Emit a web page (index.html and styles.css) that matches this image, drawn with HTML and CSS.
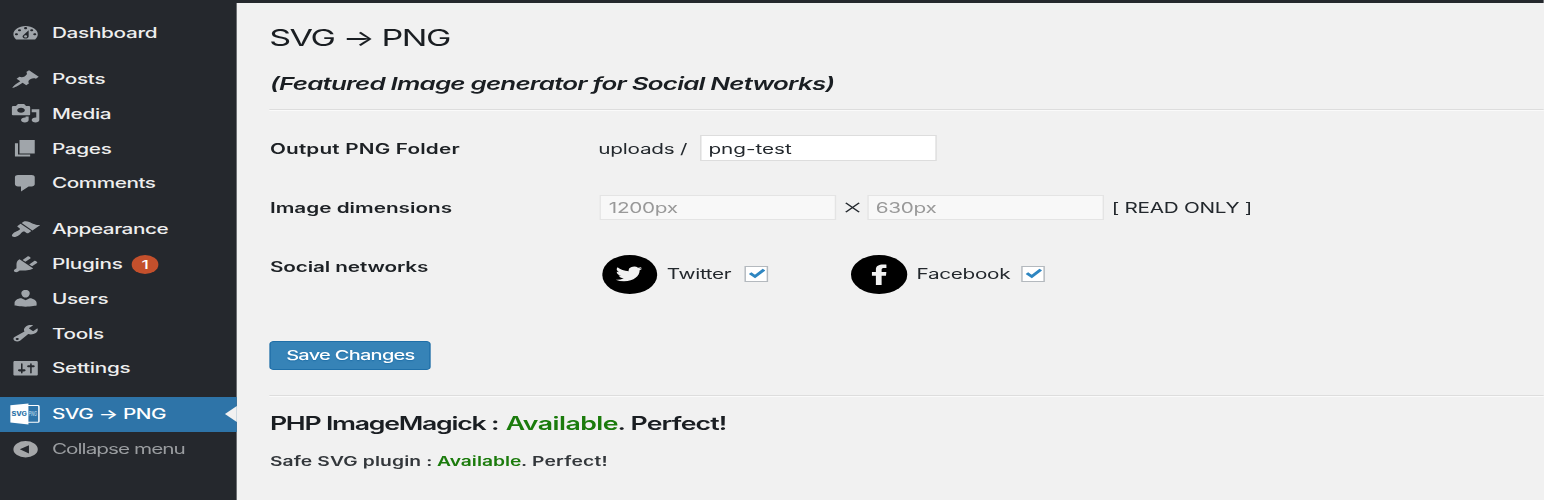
FILE: index.html
```
<!DOCTYPE html>
<html lang="en">
<head>
<meta charset="utf-8">
<title>SVG → PNG</title>
<link rel="stylesheet" href="styles.css">
</head>
<body>
<div class="screen">
  <nav class="sidebar">
    <a class="item"><svg class="ico" viewBox="0 0 20 20"><path d="M3.76 16h12.48c1.1-1.37 1.76-3.11 1.76-5 0-4.42-3.58-8-8-8s-8 3.58-8 8c0 1.89.66 3.63 1.76 5zM10 4c.55 0 1 .45 1 1s-.45 1-1 1-1-.45-1-1 .45-1 1-1zM6 6c.55 0 1 .45 1 1s-.45 1-1 1-1-.45-1-1 .45-1 1-1zm8 0c.55 0 1 .45 1 1s-.45 1-1 1-1-.45-1-1 .45-1 1-1zm-5.37 5.55L12 7v6c0 1.1-.9 2-2 2s-2-.9-2-2c0-.57.24-1.08.63-1.45zM4 10c.55 0 1 .45 1 1s-.45 1-1 1-1-.45-1-1 .45-1 1-1zm12 0c.55 0 1 .45 1 1s-.45 1-1 1-1-.45-1-1 .45-1 1-1zm-5 3c0-.55-.45-1-1-1s-1 .45-1 1 .45 1 1 1 1-.45 1-1z"/></svg><span>Dashboard</span></a>
    <a class="item first"><svg class="ico" viewBox="0 0 20 20"><path d="M10.44 3.02l1.82-1.82 6.36 6.35-1.83 1.82c-1.05-.68-2.48-.57-3.41.36l-.75.75c-.92.93-1.04 2.35-.35 3.41l-1.83 1.82-2.41-2.41-2.8 2.79c-.42.42-3.38 2.71-3.8 2.29s1.86-3.39 2.28-3.81l2.79-2.79L4.1 9.36l1.83-1.82c1.05.69 2.48.57 3.4-.36l.75-.75c.93-.92 1.05-2.35.36-3.41z"/></svg><span>Posts</span></a>
    <a class="item"><svg class="ico" viewBox="0 0 20 20"><path d="M13 11V4c0-.55-.45-1-1-1h-1.67L9 1H5L3.67 3H2c-.55 0-1 .45-1 1v7c0 .55.45 1 1 1h10c.55 0 1-.45 1-1zM7 4.5c1.38 0 2.5 1.12 2.5 2.5S8.38 9.5 7 9.5 4.5 8.38 4.5 7 5.62 4.5 7 4.5zM14 6h5v10.5c0 1.38-1.12 2.5-2.5 2.5S14 17.88 14 16.5s1.12-2.5 2.5-2.5c.17 0 .34.02.5.05V9h-3V6zm-4 8.05V13h2v3.5c0 1.38-1.12 2.5-2.5 2.5S7 17.88 7 16.5 8.12 14 9.5 14c.17 0 .34.02.5.05z"/></svg><span>Media</span></a>
    <a class="item"><svg class="ico" viewBox="0 0 20 20"><path d="M6 15V2h10v13H6zm-1 1h8v2H3V5h2v11z"/></svg><span>Pages</span></a>
    <a class="item"><svg class="ico" viewBox="0 0 20 20"><path d="M5 2h9c1.1 0 2 .9 2 2v7c0 1.1-.9 2-2 2h-2l-5 5v-5H5c-1.1 0-2-.9-2-2V4c0-1.1.9-2 2-2z"/></svg><span class="snug">Comments</span></a>
    <a class="item first"><svg class="ico" viewBox="0 0 20 20"><path d="M14.48 11.06L7.41 3.99l1.5-1.5c.5-.56 2.3-.47 3.51.32 1.21.8 1.43 1.28 2.91 2.1 1.18.64 2.45 1.26 4.45.85zm-.71.71L6.7 4.7 4.93 6.47c-.39.39-.39 1.02 0 1.41l1.06 1.06c.39.39.39 1.03 0 1.42-.6.6-1.43 1.11-2.21 1.69-.35.26-.7.53-1.01.84C1.43 14.23.4 16.08 1.4 17.07c.99 1 2.84-.03 4.18-1.36.31-.31.58-.66.85-1.02.57-.78 1.08-1.61 1.69-2.21.39-.39 1.02-.39 1.41 0l1.06 1.06c.39.39 1.02.39 1.41 0z"/></svg><span class="snug">Appearance</span></a>
    <a class="item"><svg class="ico" viewBox="0 0 20 20"><path d="M13.11 4.36L9.87 7.6 8 5.73l3.24-3.24c.35-.34 1.05-.2 1.56.32.52.51.66 1.21.31 1.55zm-8 1.77l.91-1.12 9.01 9.01-1.19.84c-.71.71-2.63 1.16-3.82 1.16H6.14L4.9 17.26c-.59.59-1.54.59-2.12 0-.59-.58-.59-1.53 0-2.12l1.24-1.24v-3.88c0-1.13.4-3.19 1.09-3.89zm7.26 3.97l3.24-3.24c.34-.35 1.04-.21 1.55.31.52.51.66 1.21.31 1.55l-3.24 3.25z"/></svg><span>Plugins</span><b class="badge">1</b></a>
    <a class="item"><svg class="ico" viewBox="0 0 20 20"><path d="M10 9.25c-2.27 0-2.73-3.44-2.73-3.44C7 4.02 7.82 2 9.97 2c2.16 0 2.98 2.02 2.71 3.81 0 0-.41 3.44-2.68 3.44zm0 2.57L12.72 10c2.39 0 4.52 2.33 4.52 4.53v2.49s-3.65 1.13-7.24 1.13c-3.65 0-7.24-1.13-7.24-1.13v-2.49c0-2.25 1.94-4.48 4.47-4.48z"/></svg><span>Users</span></a>
    <a class="item"><svg class="ico" viewBox="0 0 20 20"><path d="M16.68 9.77c-1.34 1.34-3.3 1.67-4.95.99l-5.41 6.52c-.99.99-2.59.99-3.58 0s-.99-2.59 0-3.57l6.52-5.42c-.68-1.65-.35-3.61.99-4.95 1.28-1.28 3.12-1.62 4.72-1.06l-2.89 2.89 2.82 2.82 2.86-2.87c.53 1.58.18 3.39-1.08 4.65zM3.81 16.21c.4.39 1.04.39 1.43 0 .4-.4.4-1.04 0-1.43-.39-.4-1.03-.4-1.43 0-.39.39-.39 1.03 0 1.43z"/></svg><span>Tools</span></a>
    <a class="item"><svg class="ico" viewBox="0 0 20 20"><path d="M18 16V4c0-.55-.45-1-1-1H3c-.55 0-1 .45-1 1v12c0 .55.45 1 1 1h14c.55 0 1-.45 1-1zM8 11h1c.55 0 1 .45 1 1s-.45 1-1 1H8v1.5c0 .28-.22.5-.5.5s-.5-.22-.5-.5V13H6c-.55 0-1-.45-1-1s.45-1 1-1h1V5.5c0-.28.22-.5.5-.5s.5.22.5.5V11zm5-2h-1c-.55 0-1-.45-1-1s.45-1 1-1h1V5.5c0-.28.22-.5.5-.5s.5.22.5.5V7h1c.55 0 1 .45 1 1s-.45 1-1 1h-1v5.5c0 .28-.22.5-.5.5s-.5-.22-.5-.5V9z"/></svg><span>Settings</span></a>
    <a class="item first current">
      <svg class="logo" viewBox="0 0 20 22">
        <rect x="10" y="2.6" width="9.3" height="16.6" rx=".8" fill="none" stroke="#fff" stroke-width="1"/>
        <path fill="#fff" d="M0 2.2L12.2.6v20.8L0 19.4z"/>
        <text class="logo-svg" x=".8" y="13" textLength="10.4" lengthAdjust="spacingAndGlyphs">SVG</text>
        <text class="logo-png" x="12.3" y="13" textLength="5.7" lengthAdjust="spacingAndGlyphs">PNG</text>
      </svg><span class="wide">SVG → PNG</span></a>
    <a class="item collapse"><svg class="ico" viewBox="0 0 20 20"><path fill-rule="evenodd" d="M10 2a8 8 0 1 0 0 16 8 8 0 0 0 0-16zM12.2 6v8L6.2 10z"/></svg><span>Collapse menu</span></a>
  </nav>

  <main class="main">
    <h1 class="title">SVG → PNG</h1>
    <h2 class="subtitle">(Featured Image generator for Social Networks)</h2>
    <hr class="rule rule-top">

    <div class="row row-folder">
      <label class="label folder">Output PNG Folder</label>
      <span class="prefix">uploads /</span>
      <span class="field editable">png-test</span>
    </div>
    <div class="row row-size">
      <label class="label dims">Image dimensions</label>
      <span class="field">1200px</span>
      <span class="times"><svg viewBox="0 0 10 11"><path d="M.5.8l9 9.4M9.5.8l-9 9.4"/></svg></span>
      <span class="field">630px</span>
      <span class="note">[ READ ONLY ]</span>
    </div>
    <div class="row row-social">
      <label class="label social">Social networks</label>
      <span class="disc"><svg class="bird" viewBox="0 0 24 24"><path d="M23.95 4.57a10 10 0 0 1-2.82.77 4.96 4.96 0 0 0 2.16-2.72c-.95.55-2 .96-3.13 1.18a4.92 4.92 0 0 0-8.38 4.48C7.69 8.1 4.07 6.13 1.64 3.16a4.92 4.92 0 0 0 1.52 6.57 4.9 4.9 0 0 1-2.23-.61v.06c0 2.38 1.7 4.37 3.95 4.82a5 5 0 0 1-2.21.09 4.94 4.94 0 0 0 4.6 3.42A9.87 9.87 0 0 1 0 19.54a13.94 13.94 0 0 0 7.55 2.21c9.05 0 14-7.5 14-13.98 0-.21 0-.42-.02-.63a9.94 9.94 0 0 0 2.46-2.55z"/></svg></span>
      <span class="name twitter">Twitter</span>
      <span class="check"><svg viewBox="0 0 12 11"><path d="M.9 5.2l3.6 3.6L11.2 1.2"/></svg></span>
      <span class="disc second"><svg class="eff" viewBox="0 0 10.5 21"><path d="M6.9 21v-9.4h3l.5-3.9H6.9V5.4c0-1.2.4-1.8 1.9-1.8h1.7V.2C10.2.1 9.1 0 8 0 4.9 0 2.9 1.6 2.9 5v2.7H0v3.9h2.9V21z"/></svg></span>
      <span class="name facebook">Facebook</span>
      <span class="check"><svg viewBox="0 0 12 11"><path d="M.9 5.2l3.6 3.6L11.2 1.2"/></svg></span>
    </div>

    <button class="save" type="button">Save Changes</button>
    <hr class="rule rule-mid">
    <p class="status big"><span class="what">PHP ImageMagick :</span><span class="ok">Available</span><span class="rest">. Perfect!</span></p>
    <p class="status small"><span class="what">Safe SVG plugin :</span><span class="ok">Available</span><span class="rest">. Perfect!</span></p>
  </main>
</div>
</body>
</html>
```
FILE: styles.css
```
* { box-sizing: border-box; }
html, body { margin: 0; height: 500px; overflow: hidden; background: #f1f1f1; }
body { font: 400 14px/20px Inter, "Liberation Sans", sans-serif; color: #23282d; }

/* The screen is drawn at its native width and widened horizontally. */
.screen {
  display: flex;
  width: 1043.3px;
  height: 500px;
  border-top: 3px solid #25282d;
  transform: scaleX(1.48);
  transform-origin: 0 0;
  white-space: nowrap;
}

.sidebar { flex: none; width: 160.2px; padding-top: 12.5px; background: #25282d; }
.item {
  display: flex;
  align-items: center;
  height: 34.72px;
  padding-left: 6.7px;
  color: #eee;
  font-weight: 500;
  letter-spacing: -.2px;
}
.item span { padding-top: .4px; }
.item.first { margin-top: 11.4px; }
.ico { flex: none; width: 20.6px; height: 20.6px; margin-right: 7.8px; fill: #a0a5aa; }
.snug { letter-spacing: -.3px; }
.badge {
  width: 18.4px;
  height: 18.8px;
  margin: 1px 0 0 6px;
  border-radius: 50%;
  background: #c4502c;
  color: #fff;
  font: 500 12px/19px Inter, sans-serif;
  text-align: center;
}
.current { position: relative; padding-left: 7.4px; background: #2e74a8; color: #fff; }
.current::after {
  content: "";
  position: absolute;
  right: 0;
  top: 9px;
  border: solid transparent;
  border-width: 8.4px 8px 8.4px 0;
  border-right-color: #f1f1f1;
}
.logo { flex: none; width: 20px; height: 22px; margin-right: 7.7px; overflow: visible; }
.logo-svg { font: 800 5.6px Inter, sans-serif; letter-spacing: 0; fill: #2e74a8; }
.logo-png { font: italic 600 6px Inter, sans-serif; letter-spacing: 0; fill: #a9c9e2; }
.wide { letter-spacing: -.3px; }
.collapse { color: #9a9da0; font-weight: 400; }
.collapse span { letter-spacing: -.65px; }
.collapse .ico { fill: #a5a7a9; }

.main { flex: 1; padding: 20px 0 0 22.2px; background: #f1f1f1; }
.title { margin: 0 0 0 -.5px; color: #1a1e22; font-size: 23px; line-height: 30px; font-weight: 400; letter-spacing: -1px; }
.subtitle { margin: 20px 0 0; color: #1a1e22; font-size: 17.5px; line-height: 21px; font-weight: 600; font-style: italic; letter-spacing: -.52px; }
.rule { margin: 0; border: 0; border-top: 1px solid #ddd; border-bottom: 1px solid #fafafa; }
.rule-top { margin-top: 15px; }

.row { display: flex; align-items: center; }
.row-folder { height: 26px; margin-top: 24px; }
.row-folder .label, .row-folder .prefix, .row-size .label, .note { padding-top: 1px; }
.row-size { height: 26px; margin-top: 33.5px; }
.row-social { height: 38.5px; margin-top: 34.5px; }
.label { width: 223px; color: #1d2125; font-weight: 600; }
.folder { letter-spacing: .12px; }
.dims { letter-spacing: 0; }
.social { align-self: flex-start; line-height: 24px; letter-spacing: -.08px; }
.prefix { width: 68.5px; margin-left: -1.2px; letter-spacing: -.15px; }
.field {
  width: 160px;
  height: 25.5px;
  padding-left: 5px;
  border: 1.5px solid #e4e4e4;
  background: #f8f8f8;
  color: #999;
  line-height: 24px;
  letter-spacing: -.2px;
}
.editable { border-color: #ddd; background: #fff; color: #23282d; line-height: 25px; letter-spacing: -.03px; }
.times { width: 20.3px; }
.times svg { display: block; width: 10px; height: 11px; margin: 0 auto; fill: none; stroke: #23282d; stroke-width: 1.2; }
.note { margin-left: 5.5px; letter-spacing: -.2px; }

.disc { display: flex; align-items: center; justify-content: center; width: 37.8px; height: 38.5px; margin-left: 1.2px; border-radius: 50%; background: #000; }
.second { margin-left: 56.5px; }
.bird { width: 18px; height: 18px; fill: #f1f1f1; }
.eff { width: 10.2px; height: 21.5px; fill: #f1f1f1; }
.name { margin-left: 6.2px; letter-spacing: -.22px; }
.twitter { width: 52px; }
.facebook { width: 70.8px; }
.check { width: 16.3px; height: 16.5px; margin-top: -1px; padding: 1.5px 0 0 2.2px; border: 1px solid #b4b9be; background: #fff; }
.check svg { display: block; width: 11px; height: 11px; fill: none; stroke: #2e86c1; stroke-width: 2.7; }

.save {
  display: block;
  width: 108.8px;
  height: 29.5px;
  margin: 47px 0 0;
  padding: 0;
  border: 1px solid #1f6fa8;
  border-bottom-width: 1.5px;
  border-radius: 3px;
  background: #3683b7;
  color: #fff;
  font: 500 13.5px/27px Inter, sans-serif;
  letter-spacing: -.48px;
  text-shadow: 0 1px 1px #1f6fa8;
}
.rule-mid { margin-top: 25px; }
.status { display: flex; margin: 0; font-weight: 600; }
.big { margin-top: 16px; color: #1a1e22; font-size: 18px; line-height: 21px; letter-spacing: -.57px; }
.big .what { width: 159.4px; letter-spacing: -.84px; }
.big .ok { width: 75.5px; letter-spacing: -.35px; }
.small { margin-top: 16.5px; font-size: 13px; line-height: 20px; color: #33373b; }
.small .what { width: 112.9px; letter-spacing: .08px; }
.small .ok { width: 56.7px; }
.small .rest { letter-spacing: .15px; }
.ok { color: #1b7b0c; }
```
